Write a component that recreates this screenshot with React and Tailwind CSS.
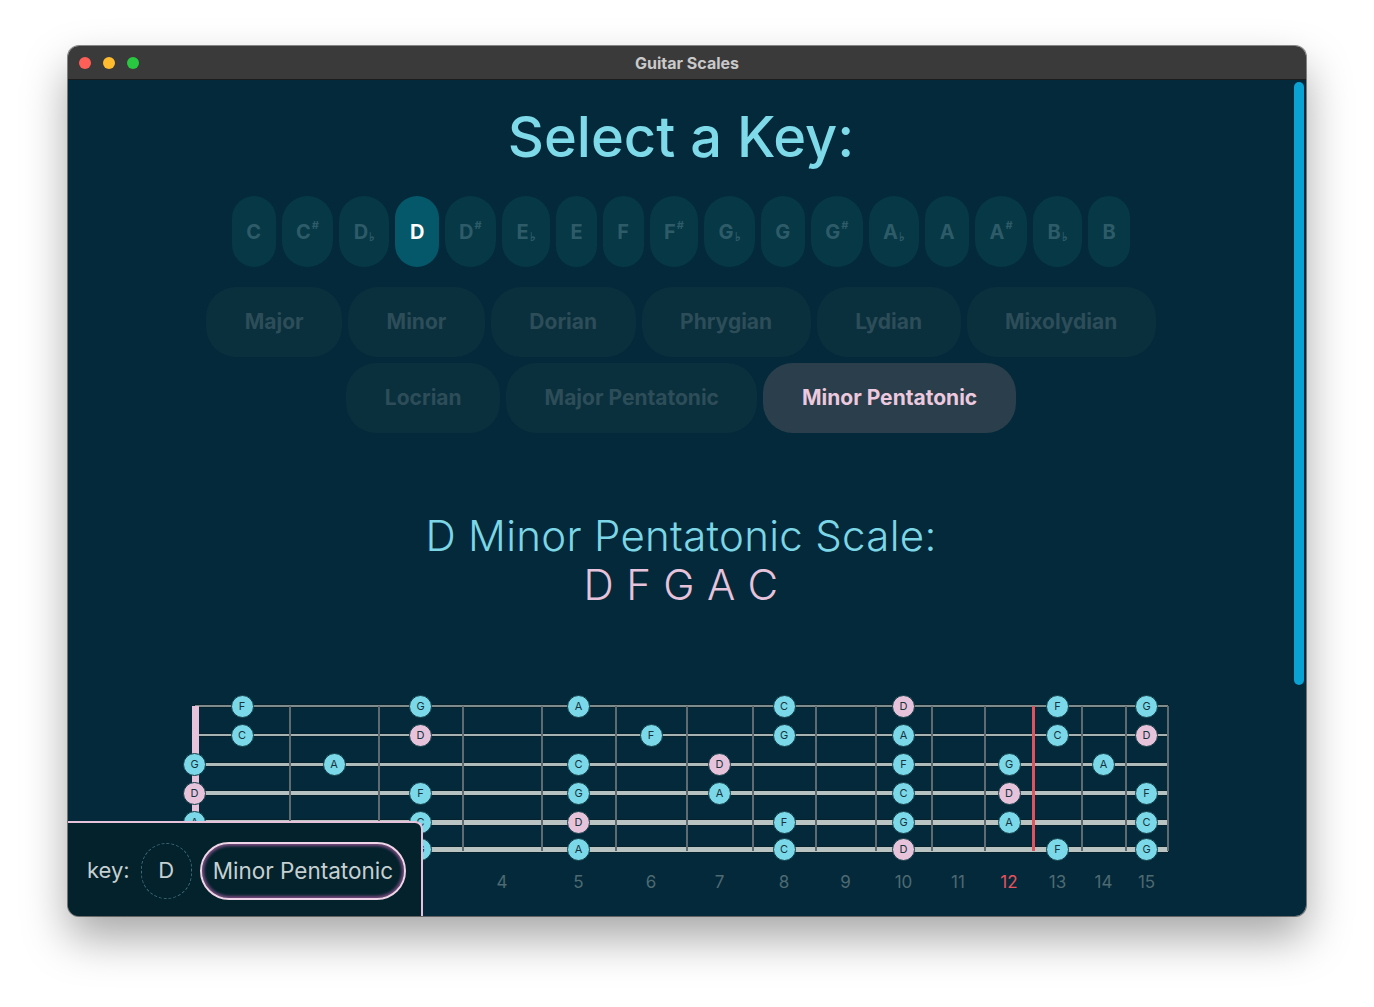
import React from "react";

const FRETS = [0, 95, 184, 268, 347, 421, 492, 558, 621, 681, 737, 790, 839, 887, 931, 973];

const KEYS = [
  { n: "C" },
  { n: "C", acc: "#" },
  { n: "D", acc: "b" },
  { n: "D", active: true },
  { n: "D", acc: "#" },
  { n: "E", acc: "b" },
  { n: "E" },
  { n: "F" },
  { n: "F", acc: "#" },
  { n: "G", acc: "b" },
  { n: "G" },
  { n: "G", acc: "#" },
  { n: "A", acc: "b" },
  { n: "A" },
  { n: "A", acc: "#" },
  { n: "B", acc: "b" },
  { n: "B" },
];

const MODES = [
  ["Major", "Minor", "Dorian", "Phrygian", "Lydian", "Mixolydian"],
  ["Locrian", "Major Pentatonic", "Minor Pentatonic"],
];

// strings, high e on top
const STRINGS = [
  { y: 12, h: 2, color: "#7f8c8e", notes: [[1, "F"], [3, "G"], [5, "A"], [8, "C"], [10, "D"], [13, "F"], [15, "G"]] },
  { y: 41, h: 2, color: "#a7b3b3", notes: [[1, "C"], [3, "D"], [6, "F"], [8, "G"], [10, "A"], [13, "C"], [15, "D"]] },
  { y: 70, h: 3, color: "#afbbbb", notes: [[0, "G"], [2, "A"], [5, "C"], [7, "D"], [10, "F"], [12, "G"], [14, "A"]] },
  { y: 99, h: 4, color: "#b6c2c1", notes: [[0, "D"], [3, "F"], [5, "G"], [7, "A"], [10, "C"], [12, "D"], [15, "F"]] },
  { y: 128, h: 5, color: "#b9c4c3", notes: [[0, "A"], [3, "C"], [5, "D"], [8, "F"], [10, "G"], [12, "A"], [15, "C"]] },
  { y: 155, h: 5, color: "#b9c4c3", notes: [[1, "F"], [3, "G"], [5, "A"], [8, "C"], [10, "D"], [13, "F"], [15, "G"]] },
];

function fretCenter(n) {
  if (n === 0) return 0;
  return (FRETS[n - 1] + FRETS[n]) / 2;
}

function KeyPill({ n, acc, active }) {
  return (
    <button
      type="button"
      className={`h-[71px] rounded-full px-[14.4px] flex items-center justify-center text-[20px] font-bold ${
        active ? "bg-[#05586a] text-white" : "bg-[#063846] text-[#2e5b68]"
      }`}
    >
      <span>{n}</span>
      {acc === "#" && <span className="text-[11px] -mt-[12px] ml-[1px]">#</span>}
      {acc === "b" && <span className="text-[12px] mt-[10px] ml-[1px]">♭</span>}
    </button>
  );
}

function ModePill({ label, active }) {
  return (
    <button
      type="button"
      className={`h-[70px] rounded-[30px] px-[38.5px] text-[21px] font-bold ${
        active ? "bg-[#2a3f4b] text-[#ecc9df]" : "bg-[#0a303d] text-[#2d4d59]"
      }`}
    >
      {label}
    </button>
  );
}

function Fretboard() {
  return (
    <div className="relative mx-auto mt-[85px] h-[205px] w-[973px] shrink-0">
      {/* strings */}
      {STRINGS.map((s, i) => (
        <div
          key={`s${i}`}
          className="absolute left-0 w-[973px] shadow-[0_0_0_1px_rgba(10,30,36,0.6)]"
          style={{ top: s.y - s.h / 2, height: s.h, background: s.color }}
        />
      ))}
      {/* frets */}
      {FRETS.slice(1).map((x, i) =>
        i + 1 === 12 ? (
          <div key={`f${i}`} className="absolute top-[12px] h-[145px] w-[3px] bg-[#e0525c]" style={{ left: x - 1.5 }} />
        ) : (
          <div key={`f${i}`} className="absolute top-[12px] h-[145px] w-[2px] bg-[#5f6b70]" style={{ left: x - 1 }} />
        )
      )}
      {/* nut */}
      <div className="absolute left-[-3px] top-[12px] h-[145px] w-[7px] bg-[#e6c3da]" />
      {/* notes */}
      {STRINGS.map((s, i) =>
        s.notes.map(([f, note]) => (
          <div
            key={`n${i}-${f}`}
            className={`absolute flex h-[23px] w-[23px] items-center justify-center rounded-full border border-[#123b46] text-[11px] text-[#17353e] ${
              note === "D" ? "bg-[#e6c3da]" : "bg-[#7bd8e8]"
            }`}
            style={{ left: fretCenter(f) - 11.5, top: s.y - 11.5 }}
          >
            {note}
          </div>
        ))
      )}
      {/* fret numbers (1-3 sit under the summary panel) */}
      {FRETS.slice(4).map((_, i) => {
        const n = i + 4;
        return (
          <div
            key={`l${n}`}
            className={`absolute top-[176px] w-[30px] text-center text-[17px] ${
              n === 12 ? "text-[#e8525d]" : "text-[#4e6a72]"
            }`}
            style={{ left: fretCenter(n) - 15 }}
          >
            {n}
          </div>
        );
      })}
    </div>
  );
}

export default function App() {
  return (
    <div className="min-h-screen bg-white pl-[68px] pt-[46px] font-['Inter',sans-serif]">
      <div className="flex h-[870px] w-[1238px] flex-col overflow-hidden rounded-[11px] shadow-[0_0_0_1px_rgba(0,0,0,0.45),0_22px_45px_rgba(0,0,0,0.35)]">
        {/* title bar */}
        <div className="grid h-[34px] shrink-0 grid-cols-[1fr_auto_1fr] items-center border-b border-[#1c1c1c] bg-[#3b3a3b]">
          <div className="flex gap-[12px] pl-[11px]">
            <span className="h-[12px] w-[12px] rounded-full bg-[#fe5f57]" />
            <span className="h-[12px] w-[12px] rounded-full bg-[#febc2e]" />
            <span className="h-[12px] w-[12px] rounded-full bg-[#28c840]" />
          </div>
          <div className="text-[16px] font-bold text-[#c9c9c9]">Guitar Scales</div>
          <div />
        </div>

        {/* content */}
        <div className="relative flex flex-1 overflow-hidden bg-[#03293a]">
          <main className="flex flex-1 flex-col items-center pt-[29px]">
            <h1 className="text-[56px] font-medium leading-[56px] text-[#7ed9e9]">Select a Key:</h1>

            <div className="mt-[31px] flex gap-[6px]">
              {KEYS.map((k, i) => (
                <KeyPill key={i} {...k} />
              ))}
            </div>

            <div className="mt-[20px] flex flex-col items-center gap-[6px]">
              {MODES.map((row, r) => (
                <div key={r} className="flex gap-[6px]">
                  {row.map((m) => (
                    <ModePill key={m} label={m} active={m === "Minor Pentatonic"} />
                  ))}
                </div>
              ))}
            </div>

            <div className="mt-[78px] text-center text-[42px] font-light leading-[49px] tracking-[0.3px]">
              <div className="text-[#7cd6e6]">D Minor Pentatonic Scale:</div>
              <div className="text-[#e6c3da]">D F G A C</div>
            </div>

            <Fretboard />
          </main>

          {/* scrollbar */}
          <div className="w-[12px] shrink-0 pt-[2px]">
            <div className="h-[603px] w-[10px] rounded-full bg-[#0aa1d3]" />
          </div>

          {/* selection summary */}
          <div className="absolute bottom-0 left-0 flex h-[95px] w-[355px] items-center gap-[8px] rounded-tr-[8px] border-r-2 border-t-2 border-[#e6c3da] bg-[#03222c] pl-[19px] pt-[2px]">
            <span className="text-[22px] text-[#c6d0d1]">key:</span>
            <span className="ml-[3px] flex h-[56px] w-[51px] items-center justify-center rounded-full border border-dashed border-[#3d6c79] text-[22px] text-[#c6d0d1]">
              D
            </span>
            <span className="flex h-[58px] items-center rounded-full border-2 border-[#f0d4e7] px-[11px] text-[22.5px] text-[#c6d0d1] shadow-[inset_0_0_3px_2px_#7a4b80]">
              Minor Pentatonic
            </span>
          </div>
        </div>
      </div>
    </div>
  );
}
